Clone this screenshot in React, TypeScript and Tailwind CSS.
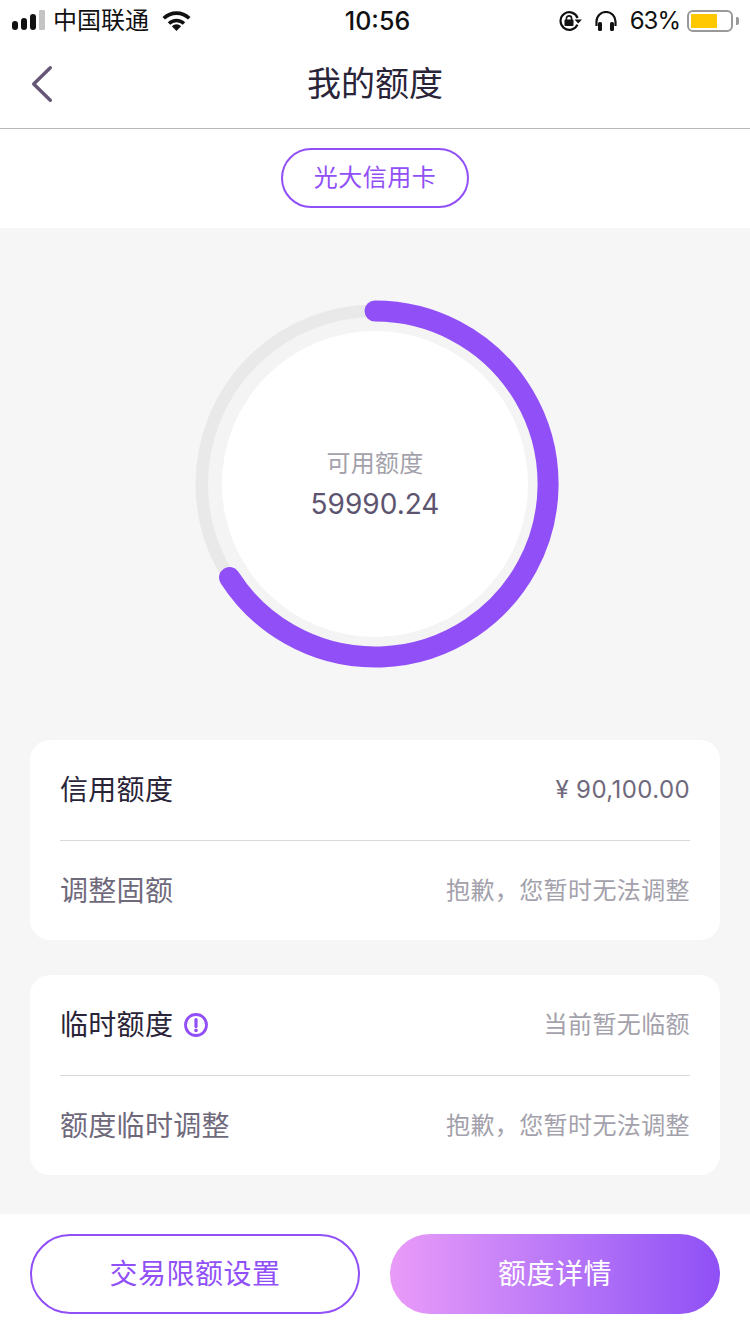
const fontStack = "font-['Inter','Noto_Sans_CJK_SC',sans-serif]";

const StatusBar = () => (
  <div className="flex h-[45px] items-center justify-between pb-[3px] pl-[12px] pr-[11px] text-[24px] leading-none text-[#111]">
    <div className="flex w-[250px] items-center">
      <div className="mb-[2px] flex items-end gap-[3px]">
        <div className="h-[9px] w-[6px] rounded-[3px] bg-[#111]" />
        <div className="h-[12px] w-[6px] rounded-[3px] bg-[#111]" />
        <div className="h-[16px] w-[6px] rounded-[3px] bg-[#111]" />
        <div className="h-[20px] w-[6px] rounded-[1px] bg-[#c4c4c4]" />
      </div>
      <span className="ml-[8px]">中国联通</span>
      <svg className="mb-[1px] ml-[13px]" width="29" height="20" viewBox="0 0 29 20">
        <path d="M14.5 20l-4.6-4.7a6.4 6.4 0 0 1 9.2 0z" fill="#111" />
        <path d="M5.8 11.2a12.4 12.4 0 0 1 17.4 0l-2.4 2.5a9 9 0 0 0-12.6 0z" fill="#111" />
        <path d="M0.5 6a20 20 0 0 1 28 0l-2.5 2.6a16.4 16.4 0 0 0-23 0z" fill="#111" />
      </svg>
    </div>
    <span className="text-[25px] font-medium">10:56</span>
    <div className="flex w-[246px] items-center justify-end">
      <svg width="23" height="20" viewBox="0 0 23 20" fill="none">
        <path d="M18.4 13.6A8.8 8.8 0 1 1 18.6 7" stroke="#111" strokeWidth="2.2" />
        <path d="M23 8.5l-3.8 4-3.6-4z" fill="#111" />
        <rect x="5.5" y="8.5" width="9" height="6.5" rx="1" fill="#111" />
        <path d="M7.4 9V7.5a2.6 2.6 0 0 1 5.2 0V9" stroke="#111" strokeWidth="1.6" />
      </svg>
      <svg className="ml-[13px]" width="22" height="20" viewBox="0 0 22 20" fill="none">
        <path d="M1.5 15v-4.5a9.5 9.5 0 0 1 19 0V15" stroke="#111" strokeWidth="2.2" />
        <rect x="3" y="11" width="4" height="9" rx="1.5" fill="#111" />
        <rect x="15" y="11" width="4" height="9" rx="1.5" fill="#111" />
      </svg>
      <span className="ml-[13px] tracking-[-1px]">63%</span>
      <div className="ml-[7px] flex h-[22px] w-[46px] items-center rounded-[6px] border-2 border-[#999] p-[2px]">
        <div className="h-full w-[26px] bg-[#ffc800]" />
      </div>
      <div className="ml-[3px] h-[8px] w-[3px] rounded-r-[2px] bg-[#999]" />
    </div>
  </div>
);

const Ring = () => (
  <div className="relative h-[368px] w-[368px]">
    <svg width="368" height="368" viewBox="0 0 368 368" fill="none">
      <circle cx="184" cy="184" r="173" stroke="#e9e9e9" strokeWidth="13" />
      <circle cx="184" cy="184" r="160" stroke="#f4f4f4" strokeWidth="14" />
      <circle cx="184" cy="184" r="153" fill="#fff" />
      <path
        d="M184 11A173 173 0 1 1 38.5 277.5"
        stroke="#914ff7"
        strokeWidth="21"
        strokeLinecap="round"
      />
    </svg>
    <div className="absolute inset-0 flex flex-col items-center justify-center">
      <span className="text-[24px] leading-[34px] tracking-[0.3px] text-[#a3a1ab]">可用额度</span>
      <span className="mt-[6px] text-[28px] leading-[34px] text-[#5d5470]">59990.24</span>
    </div>
  </div>
);

const Row = ({ left, right, leftClass, rightClass, icon, last }: { left: string; right: string; leftClass: string; rightClass: string; icon?: boolean; last?: boolean }) => (
  <div className={`flex items-center justify-between ${last ? "h-[99px]" : "h-[100px]"}`}>
    <div className="flex items-center">
      <span className={`text-[28px] tracking-[0.3px] ${leftClass}`}>{left}</span>
      {icon && (
        <svg className="ml-[11px]" width="24" height="24" viewBox="0 0 24 24" fill="none">
          <circle cx="12" cy="12" r="10.5" stroke="#914ff7" strokeWidth="2.8" />
          <path d="M12 6.5v7" stroke="#914ff7" strokeWidth="3.2" strokeLinecap="round" />
          <circle cx="12" cy="17.4" r="1.8" fill="#914ff7" />
        </svg>
      )}
    </div>
    <span className={`text-[24px] tracking-[0.4px] ${rightClass}`}>{right}</span>
  </div>
);

export default function App() {
  return (
    <div className={`flex h-[1334px] w-[750px] flex-col overflow-hidden bg-white ${fontStack}`}>
      <StatusBar />

      <div className="relative flex h-[84px] items-center justify-center border-b border-[#b9b9b9] pb-[5px]">
        <svg className="absolute left-[30px] top-[20px]" width="24" height="38" viewBox="0 0 24 38" fill="none">
          <path d="M20.3 2.7L3.7 19 20.3 35.3" stroke="#655877" strokeWidth="3.4" strokeLinecap="round" strokeLinejoin="round" />
        </svg>
        <span className="text-[34px] leading-none text-[#2a2438]">我的额度</span>
      </div>

      <div className="flex h-[99px] items-center justify-center pb-[2px]">
        <div className="flex h-[60px] w-[188px] items-center justify-center rounded-full border-2 border-[#914ff7] text-[24px] tracking-[0.5px] text-[#914ff7]">
          光大信用卡
        </div>
      </div>

      <div className="flex flex-1 flex-col items-center bg-[#f6f6f6] px-[30px] pt-[72px]">
        <Ring />
        <div className="mt-[72px] w-full rounded-[20px] bg-white px-[30px]">
          <Row left="信用额度" right="¥ 90,100.00" leftClass="text-[#2a2438]" rightClass="text-[#6f697c]" />
          <div className="h-px bg-[#d9d9d9]" />
          <Row left="调整固额" right="抱歉，您暂时无法调整" leftClass="text-[#6f697c]" rightClass="text-[#a3a1ab]" last />
        </div>
        <div className="mt-[35px] w-full rounded-[20px] bg-white px-[30px]">
          <Row left="临时额度" right="当前暂无临额" leftClass="text-[#2a2438]" rightClass="text-[#a3a1ab]" icon />
          <div className="h-px bg-[#d9d9d9]" />
          <Row left="额度临时调整" right="抱歉，您暂时无法调整" leftClass="text-[#6f697c]" rightClass="text-[#a3a1ab]" last />
        </div>
      </div>

      <div className="flex h-[120px] items-center gap-[30px] bg-white px-[30px]">
        <div className="flex h-[80px] w-[330px] items-center justify-center rounded-full border-2 border-[#914ff7] text-[28px] tracking-[0.5px] text-[#914ff7]">
          交易限额设置
        </div>
        <div className="flex h-[80px] w-[330px] items-center justify-center rounded-full bg-gradient-to-r from-[#ea9bf8] to-[#8f4ff5] text-[28px] tracking-[0.5px] text-white">
          额度详情
        </div>
      </div>
    </div>
  );
}
